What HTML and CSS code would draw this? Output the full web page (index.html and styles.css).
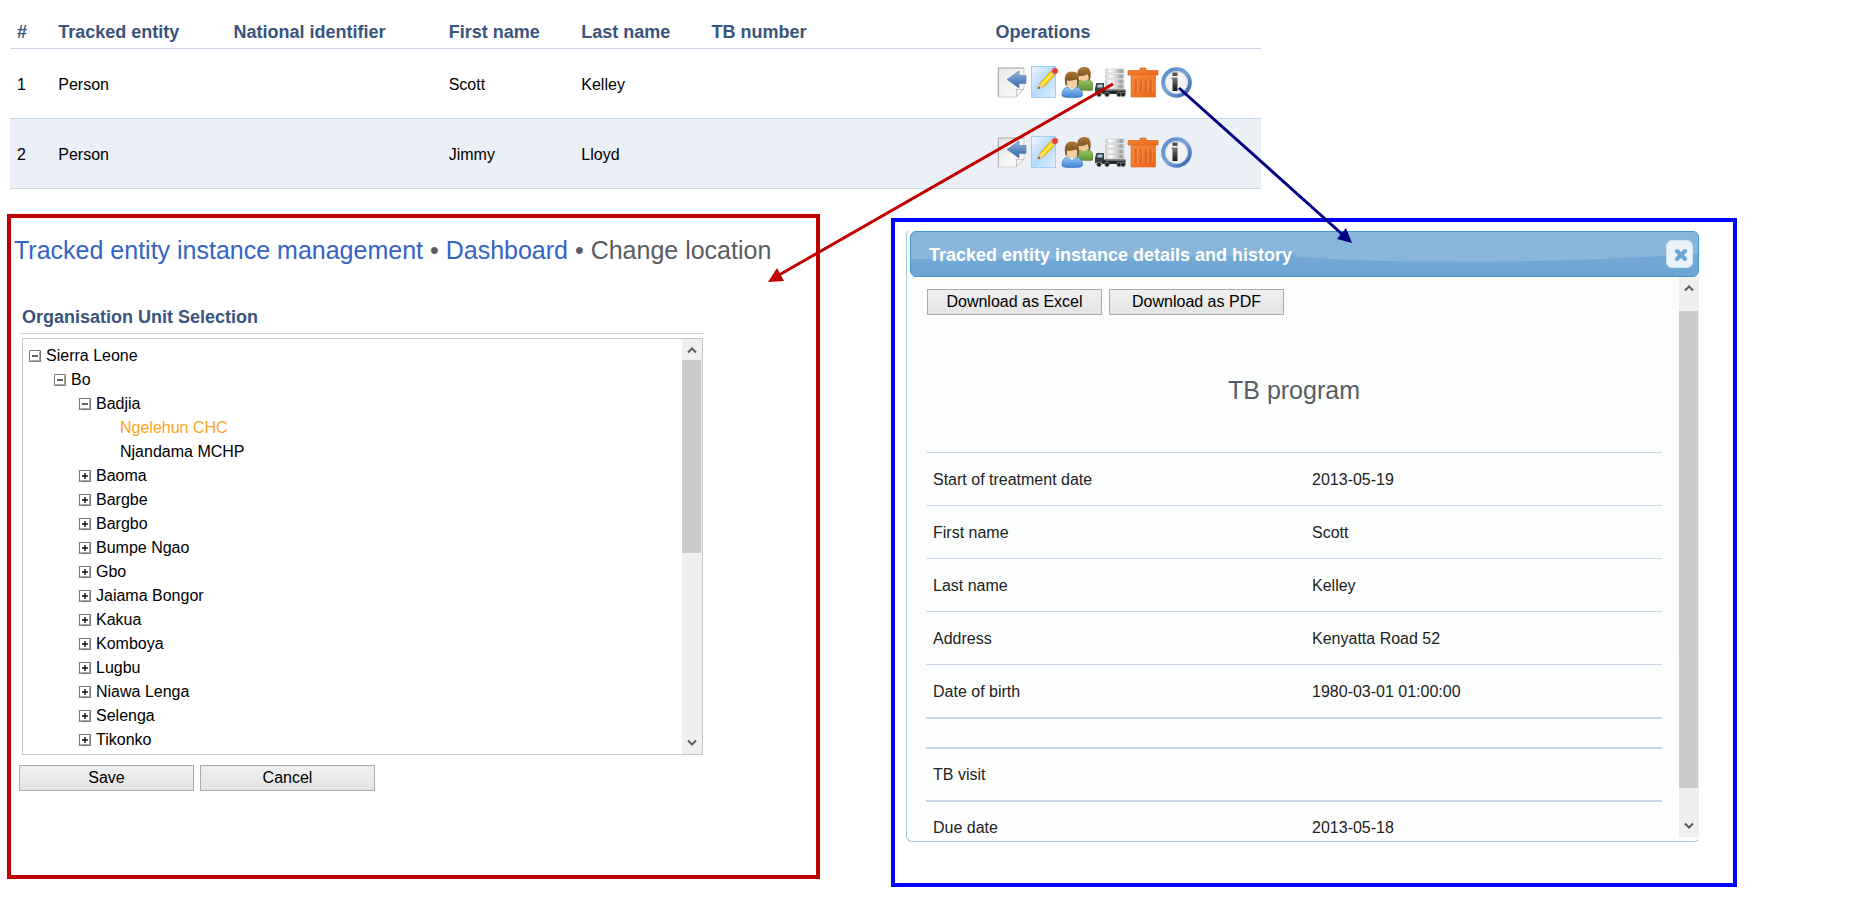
FILE: index.html
```html
<!DOCTYPE html>
<html lang="en">
<head>
<meta charset="utf-8">
<title>Tracked entity instance management</title>
<link rel="stylesheet" href="styles.css">
</head>
<body>
<svg class="defs" aria-hidden="true">
  <defs>
    <linearGradient id="paper" x1="0" y1="0" x2="1" y2="1"><stop offset="0" stop-color="#e6e6e6"/><stop offset="1" stop-color="#ffffff"/></linearGradient>
    <linearGradient id="arrowBlue" x1="0" y1="0" x2="0" y2="1"><stop offset="0" stop-color="#93b6dd"/><stop offset="1" stop-color="#2f64a6"/></linearGradient>
    <linearGradient id="sheet" x1="0" y1="0" x2="1" y2="1"><stop offset="0" stop-color="#f2f9ff"/><stop offset="0.5" stop-color="#b4d9fb"/><stop offset="1" stop-color="#e3f2ff"/></linearGradient>
    <linearGradient id="hair" x1="0" y1="0" x2="0" y2="1"><stop offset="0" stop-color="#a9783a"/><stop offset="1" stop-color="#6d4212"/></linearGradient>
    <linearGradient id="blueShirt" x1="0" y1="0" x2="0" y2="1"><stop offset="0" stop-color="#9ccaf5"/><stop offset="1" stop-color="#3b83d0"/></linearGradient>
    <linearGradient id="greenShirt" x1="0" y1="0" x2="0" y2="1"><stop offset="0" stop-color="#9cc76a"/><stop offset="1" stop-color="#5c9433"/></linearGradient>
    <linearGradient id="drum" x1="0" y1="0" x2="1" y2="0"><stop offset="0" stop-color="#cccccc"/><stop offset="0.25" stop-color="#ffffff"/><stop offset="0.6" stop-color="#d2d2d2"/><stop offset="0.85" stop-color="#9a9a9a"/><stop offset="1" stop-color="#cccccc"/></linearGradient>
    <linearGradient id="bin" x1="0" y1="0" x2="1" y2="1"><stop offset="0" stop-color="#f78a3c"/><stop offset="1" stop-color="#ee6413"/></linearGradient>
    <linearGradient id="ring" x1="0" y1="0" x2="1" y2="1"><stop offset="0" stop-color="#5688c6"/><stop offset="0.5" stop-color="#79a4d8"/><stop offset="1" stop-color="#2f62a8"/></linearGradient>
    <linearGradient id="glyph" x1="0" y1="0" x2="0" y2="1"><stop offset="0" stop-color="#777777"/><stop offset="1" stop-color="#161616"/></linearGradient>
    <linearGradient id="gloss" x1="0" y1="0" x2="0" y2="1"><stop offset="0" stop-color="#74a9d5"/><stop offset="1" stop-color="#6ca4d3"/></linearGradient>
    <symbol id="i-back" viewBox="0 0 32 32">
      <path d="M3 2h26v21l-8 8H3z" fill="url(#paper)" stroke="#d2d2d2"/>
      <path d="M3.500 1.500V31M3 2h26" stroke="#b4b4b4" fill="none"/>
      <path d="M21 31c1-3 1-5 0-8 3 1 5 1 8 0z" fill="#fafafa" stroke="#bdbdbd"/>
      <path d="M12 13.500L24 5v4.500h7v8h-7V22z" fill="url(#arrowBlue)" stroke="#5c84b5" stroke-width="0.700"/>
    </symbol>
    <symbol id="i-edit" viewBox="0 0 32 32">
      <rect x="3.500" y="0.500" width="24" height="31" fill="url(#sheet)" stroke="#9fcdf5"/>
      <path d="M10 23l2-6L23.500 4.500l4 4L16 20.500z" fill="#fbd00c" stroke="#d9a011" stroke-width="0.800"/>
      <path d="M14 18.500L25.500 6.500" stroke="#fff08a" stroke-width="1.200"/>
      <path d="M10 23l2-6 4 3.500z" fill="#f0cf98"/>
      <path d="M10 23l.800-2.600 1.600 1.500z" fill="#333"/>
      <path d="M22.500 5.500l4 4 1.500-1.500-4-4z" fill="#b5bcc4"/>
      <circle cx="27" cy="5" r="3" fill="#ee3d32"/>
    </symbol>
    <symbol id="i-people" viewBox="0 0 32 32">
      <path d="M16 24v-5c0-4 3-6 8-6s8 3 8 7v3c0 1-1 1.500-3 1.500z" fill="url(#greenShirt)" stroke="#578b31" stroke-width="0.700"/>
      <ellipse cx="23" cy="9" rx="5.200" ry="6" fill="#efc99c"/>
      <path d="M16.500 10C15.500 3.500 19 1 23.500 1S30.500 4 29.500 11c0 2-1 3.500-2 4 .5-3 0-5-1-7-3 2-6 2-10 2z" fill="url(#hair)"/>
      <path d="M1 29c0-6 3-8.500 10-8.500S21.500 23 21.500 29c0 2-3 2.500-10.500 2.500S1 31 1 29z" fill="url(#blueShirt)" stroke="#3c7cc2" stroke-width="0.700"/>
      <path d="M7.500 21l3.500 3 3.500-3z" fill="#fff"/>
      <ellipse cx="11" cy="15.500" rx="5.800" ry="7" fill="#f3cfa4"/>
      <path d="M4.500 19C2.500 10 5 5.500 11 5.500S19.500 10 17.500 19c-1 1-1.500 1-1.500 0 .5-3 0-4.500-.5-5.500-3 1-6.500 1.500-9.500 1-.5 1.500 0 2.500 0 4.500 0 1-1 1-1.500 0z" fill="url(#hair)"/>
    </symbol>
    <symbol id="i-move" viewBox="0 0 32 32">
      <g fill="url(#drum)" stroke="#bdbdbd" stroke-width="0.500">
        <rect x="11.500" y="3" width="18.500" height="4" rx="0.500"/>
        <rect x="11.500" y="8.200" width="18.500" height="4" rx="0.500"/>
        <rect x="11.500" y="13.400" width="18.500" height="4" rx="0.500"/>
        <rect x="11.500" y="18.600" width="18.500" height="4" rx="0.500"/>
      </g>
      <path d="M1 27v-5l1.500-5H10v10z" fill="#3a3f44"/>
      <path d="M3 21.500l1-3h4.500v3z" fill="#a9cbe4"/>
      <path d="M10 23.500h21.500V28H8z" fill="#24282b"/>
      <path d="M11 24.500h20" stroke="#6d6d6d"/>
      <path d="M0 28.500h9" stroke="#cfcfcf"/>
      <g fill="#1d1d1d" stroke="#9b9b9b" stroke-width="0.700"><circle cx="5" cy="28.500" r="2.300"/><circle cx="13" cy="28.500" r="2.300"/><circle cx="25" cy="28.500" r="2.300"/><circle cx="29" cy="28.500" r="2.300"/></g>
    </symbol>
    <symbol id="i-trash" viewBox="0 0 32 32">
      <path d="M13 4.500V2h6v2.500h12V9H1V4.500z" fill="url(#bin)" stroke="#d8661f" stroke-width="0.700"/>
      <path d="M4 9.500h24.500V31H4z" fill="url(#bin)" stroke="#e0641a" stroke-width="0.600"/>
      <path d="M9 13v14M14 13v14M19 13v14M24 13v14" stroke="#c05f24" stroke-width="1.300"/>
      <path d="M10.200 13v14M15.200 13v14M20.200 13v14M25.200 13v14" stroke="#fb9350" stroke-width="0.700"/>
    </symbol>
    <symbol id="i-info" viewBox="0 0 32 32">
      <circle cx="16.500" cy="16.500" r="13.300" fill="#f3f3f1" stroke="url(#ring)" stroke-width="4"/>
      <circle cx="16.500" cy="16.500" r="11" fill="none" stroke="#d3dbe4"/>
      <rect x="12.500" y="6.500" width="5" height="3.500" fill="#555"/>
      <path d="M11.500 11.500h6V25h-5V13h-1z" fill="url(#glyph)"/>
    </symbol>
    <symbol id="i-minus" viewBox="0 0 12 12">
      <path d="M.5.500h11v11H.5z" fill="#fff" stroke="#787878"/><path d="M1.500 10.500h9v-9" fill="none" stroke="#a8a8a8"/><path d="M3 6h6" stroke="#222" stroke-width="1.400"/>
    </symbol>
    <symbol id="i-plus" viewBox="0 0 12 12">
      <path d="M.5.500h11v11H.5z" fill="#fff" stroke="#787878"/><path d="M1.500 10.500h9v-9" fill="none" stroke="#a8a8a8"/><path d="M3 6h6M6 3v6" stroke="#111" stroke-width="1.400"/>
    </symbol>
    <symbol id="i-up" viewBox="0 0 10 8"><path d="M1 6.500l4-4 4 4" fill="none" stroke="#5c5c5c" stroke-width="2"/></symbol>
    <symbol id="i-down" viewBox="0 0 10 8"><path d="M1 1.500l4 4 4-4" fill="none" stroke="#5c5c5c" stroke-width="2"/></symbol>
  </defs>
</svg>

<main class="page">
  <table class="instances">
    <colgroup><col class="c-num"><col class="c-entity"><col class="c-national"><col class="c-first"><col class="c-last"><col class="c-tb"><col class="c-ops"></colgroup>
    <thead>
      <tr><th>#</th><th>Tracked entity</th><th>National identifier</th><th>First name</th><th>Last name</th><th>TB number</th><th>Operations</th></tr>
    </thead>
    <tbody>
      <tr>
        <td>1</td><td>Person</td><td></td><td>Scott</td><td>Kelley</td><td></td>
        <td class="ops-cell"><div class="ops">
          <button class="op" aria-label="Go back"><svg><use href="#i-back"/></svg></button>
          <button class="op" aria-label="Edit"><svg><use href="#i-edit"/></svg></button>
          <button class="op" aria-label="Relationships"><svg><use href="#i-people"/></svg></button>
          <button class="op" aria-label="Change location"><svg><use href="#i-move"/></svg></button>
          <button class="op" aria-label="Remove"><svg><use href="#i-trash"/></svg></button>
          <button class="op" aria-label="Show details"><svg><use href="#i-info"/></svg></button>
        </div></td>
      </tr>
      <tr>
        <td>2</td><td>Person</td><td></td><td>Jimmy</td><td>Lloyd</td><td></td>
        <td class="ops-cell"><div class="ops">
          <button class="op" aria-label="Go back"><svg><use href="#i-back"/></svg></button>
          <button class="op" aria-label="Edit"><svg><use href="#i-edit"/></svg></button>
          <button class="op" aria-label="Relationships"><svg><use href="#i-people"/></svg></button>
          <button class="op" aria-label="Change location"><svg><use href="#i-move"/></svg></button>
          <button class="op" aria-label="Remove"><svg><use href="#i-trash"/></svg></button>
          <button class="op" aria-label="Show details"><svg><use href="#i-info"/></svg></button>
        </div></td>
      </tr>
    </tbody>
  </table>

  <div class="panels">
    <section class="panel panel-location">
      <h1 class="crumbs"><a href="#management">Tracked entity instance management</a> • <a href="#dashboard">Dashboard</a> • Change location</h1>
      <div class="selection">
        <h2 class="section-title">Organisation Unit Selection</h2>
        <div class="tree-box">
          <ul class="tree">
            <li><div class="node"><button class="toggle" aria-label="Collapse Sierra Leone"><svg><use href="#i-minus"/></svg></button><a href="#sl">Sierra Leone</a></div>
              <ul>
                <li><div class="node"><button class="toggle" aria-label="Collapse Bo"><svg><use href="#i-minus"/></svg></button><a href="#bo">Bo</a></div>
                  <ul>
                    <li><div class="node"><button class="toggle" aria-label="Collapse Badjia"><svg><use href="#i-minus"/></svg></button><a href="#badjia">Badjia</a></div>
                      <ul>
                        <li><div class="node leaf"><a class="selected" href="#ngelehun">Ngelehun CHC</a></div></li>
                        <li><div class="node leaf"><a href="#njandama">Njandama MCHP</a></div></li>
                      </ul>
                    </li>
                    <li><div class="node"><button class="toggle" aria-label="Expand Baoma"><svg><use href="#i-plus"/></svg></button><a href="#baoma">Baoma</a></div></li>
                    <li><div class="node"><button class="toggle" aria-label="Expand Bargbe"><svg><use href="#i-plus"/></svg></button><a href="#bargbe">Bargbe</a></div></li>
                    <li><div class="node"><button class="toggle" aria-label="Expand Bargbo"><svg><use href="#i-plus"/></svg></button><a href="#bargbo">Bargbo</a></div></li>
                    <li><div class="node"><button class="toggle" aria-label="Expand Bumpe Ngao"><svg><use href="#i-plus"/></svg></button><a href="#bumpe">Bumpe Ngao</a></div></li>
                    <li><div class="node"><button class="toggle" aria-label="Expand Gbo"><svg><use href="#i-plus"/></svg></button><a href="#gbo">Gbo</a></div></li>
                    <li><div class="node"><button class="toggle" aria-label="Expand Jaiama Bongor"><svg><use href="#i-plus"/></svg></button><a href="#jaiama">Jaiama Bongor</a></div></li>
                    <li><div class="node"><button class="toggle" aria-label="Expand Kakua"><svg><use href="#i-plus"/></svg></button><a href="#kakua">Kakua</a></div></li>
                    <li><div class="node"><button class="toggle" aria-label="Expand Komboya"><svg><use href="#i-plus"/></svg></button><a href="#komboya">Komboya</a></div></li>
                    <li><div class="node"><button class="toggle" aria-label="Expand Lugbu"><svg><use href="#i-plus"/></svg></button><a href="#lugbu">Lugbu</a></div></li>
                    <li><div class="node"><button class="toggle" aria-label="Expand Niawa Lenga"><svg><use href="#i-plus"/></svg></button><a href="#niawa">Niawa Lenga</a></div></li>
                    <li><div class="node"><button class="toggle" aria-label="Expand Selenga"><svg><use href="#i-plus"/></svg></button><a href="#selenga">Selenga</a></div></li>
                    <li><div class="node"><button class="toggle" aria-label="Expand Tikonko"><svg><use href="#i-plus"/></svg></button><a href="#tikonko">Tikonko</a></div></li>
                  </ul>
                </li>
              </ul>
            </li>
          </ul>
          <div class="scrollbar">
            <svg class="chevron"><use href="#i-up"/></svg>
            <div class="track"><div class="thumb thumb-tree"></div></div>
            <svg class="chevron"><use href="#i-down"/></svg>
          </div>
        </div>
        <div class="actions">
          <button class="btn">Save</button>
          <button class="btn">Cancel</button>
        </div>
      </div>
    </section>

    <section class="panel panel-details">
      <div class="dialog" role="dialog" aria-labelledby="dialog-title">
        <header class="titlebar">
          <svg class="wave" viewBox="0 0 787 44" preserveAspectRatio="none" aria-hidden="true"><path d="M0 27Q190 28 384 22V25Q560 36 787 22V44H0z" fill="url(#gloss)"/></svg>
          <h2 class="dialog-title" id="dialog-title">Tracked entity instance details and history</h2>
          <button class="close" aria-label="Close"><svg viewBox="0 0 14 14"><path d="M3 3l8 8M11 3l-8 8" stroke="#6aa5d4" stroke-width="4" stroke-linecap="round"/></svg></button>
        </header>
        <div class="dialog-body">
          <div class="content">
            <div class="downloads">
              <button class="btn">Download as Excel</button>
              <button class="btn">Download as PDF</button>
            </div>
            <h3 class="program">TB program</h3>
            <table class="details">
              <tbody>
                <tr><th scope="row">Start of treatment date</th><td>2013-05-19</td></tr>
                <tr><th scope="row">First name</th><td>Scott</td></tr>
                <tr><th scope="row">Last name</th><td>Kelley</td></tr>
                <tr><th scope="row">Address</th><td>Kenyatta Road 52</td></tr>
                <tr><th scope="row">Date of birth</th><td>1980-03-01 01:00:00</td></tr>
                <tr class="spacer strong"><td colspan="2"></td></tr>
                <tr class="strong"><th scope="row">TB visit</th><td></td></tr>
                <tr class="strong"><th scope="row">Due date</th><td>2013-05-18</td></tr>
              </tbody>
            </table>
          </div>
          <div class="scrollbar scrollbar-dialog">
            <svg class="chevron"><use href="#i-up"/></svg>
            <div class="track"><div class="thumb thumb-dialog"></div></div>
            <svg class="chevron"><use href="#i-down"/></svg>
          </div>
        </div>
      </div>
    </section>
  </div>

  <svg class="arrows" aria-hidden="true">
    <path d="M1113 84L779 275" stroke="#c00000" stroke-width="3"/>
    <path d="M768 282l9-14 7 13z" fill="#c00000"/>
    <path d="M1179 88L1343 235" stroke="#000080" stroke-width="3"/>
    <path d="M1352 243l-6-15-9 11z" fill="#000080"/>
  </svg>
</main>
</body>
</html>
```

FILE: styles.css
```css
* { box-sizing: border-box; }

body {
  margin: 0;
  background: #fff;
  color: #000;
  font: 16px/24px "Liberation Sans", Arial, sans-serif;
}

h1, h2, h3, ul { margin: 0; padding: 0; }

button {
  margin: 0;
  padding: 0;
  border: 0;
  background: none;
  color: inherit;
  font: inherit;
  cursor: pointer;
}

.defs { position: absolute; width: 0; height: 0; }

.page {
  position: relative;
  padding: 16px 0 24px;
}

/* Instance list */
.instances {
  width: 66.7%;
  margin-left: 10px;
  border-spacing: 0;
  table-layout: fixed;
}

.c-num { width: 3.3%; }
.c-entity { width: 14%; }
.c-national { width: 17.2%; }
.c-first { width: 10.6%; }
.c-last { width: 10.4%; }
.c-tb { width: 22.7%; }
.c-ops { width: 21.8%; }

.instances th,
.instances td {
  padding: 0 7px;
  border-bottom: 1px solid #c7d5e7;
  text-align: left;
  white-space: nowrap;
}

.instances th {
  height: 33px;
  color: #39547d;
  font-size: 18px;
}

.instances td { height: 70px; padding-top: 2px; }
.instances .ops-cell { padding-top: 0; padding-bottom: 3px; }
.instances tbody tr:nth-child(even) { background: #ebeff6; }

.ops { display: flex; gap: 1px; }
.op, .op svg { display: block; width: 32px; height: 32px; }

/* Panels */
.panels {
  display: grid;
  grid-template-columns: 813fr 846fr;
  gap: 71px;
  align-items: start;
  padding: 25px 139px 0 7px;
}

.panel { min-width: 0; border: 4px solid; }
.panel-location { border-color: #c00000; padding: 17px 0 84px; }
.panel-details { border-color: #00f; margin-top: 4px; padding: 7px 33px 41px 11px; }

.crumbs {
  padding-left: 3px;
  color: #595c62;
  font-size: 25px;
  font-weight: 400;
  line-height: 30px;
}

.crumbs a { color: #3563c8; text-decoration: none; }

.selection { margin: 41px 112px 0 9px; }

.section-title {
  padding: 0 2px 5px;
  border-bottom: 1px solid #c7d5e7;
  color: #39547d;
  font-size: 18px;
  line-height: 22px;
}

.tree-box {
  display: flex;
  margin: 4px 1px 0 2px;
  border: 1px solid #c6c6c6;
}

.tree { flex: 1; padding: 5px 0 2px 6px; }
.tree ul { padding-left: 25px; }
.tree li { list-style: none; }
.node { display: flex; align-items: center; gap: 5px; height: 24px; }
.node.leaf { padding-left: 16px; }
.node a { color: #000; text-decoration: none; }
.node a.selected { color: #ffa41c; }
.toggle, .toggle svg { display: block; width: 12px; height: 12px; }

.scrollbar {
  display: flex;
  flex-direction: column;
  align-items: center;
  justify-content: space-between;
  width: 20px;
  padding: 7px 0;
  background: #efefef;
}

.chevron { width: 10px; height: 8px; }
.track { flex: 1; width: 100%; padding: 6px 1px 0 0; }
.thumb { background: #cbcbcb; }
.thumb-tree { height: 51%; }
.scrollbar-dialog .track { padding-top: 19px; }
.thumb-dialog { height: 93.4%; }

.actions { display: flex; gap: 6px; margin: 10px 0 0 -1px; }

.btn {
  width: 175px;
  height: 26px;
  border: 1px solid #ababab;
  background: linear-gradient(#f0f0f0, #e4e4e4);
  line-height: 24px;
}

/* Dialog */
.dialog {
  padding: 1px 0 0 3px;
  border: 1px solid #a6c9e2;
  border-top-color: transparent;
  border-right-color: transparent;
  border-radius: 6px;
  background: linear-gradient(#fbfdfd, #fcfefd 80%, #fefefe);
  background-clip: padding-box;
}

.titlebar {
  position: relative;
  display: flex;
  align-items: center;
  justify-content: space-between;
  height: 46px;
  padding: 0 5px 0 18px;
  overflow: hidden;
  border: 1px solid #4297d7;
  border-radius: 6px;
  background: #88b5da;
}

.wave { position: absolute; inset: 0; width: 100%; height: 100%; }
.dialog-title { position: relative; padding-top: 2px; color: #fff; font-size: 18px; line-height: 22px; }

.close {
  position: relative;
  display: flex;
  align-items: center;
  justify-content: center;
  width: 27px;
  height: 28px;
  padding: 2px 0 0 2px;
  border: 1px solid #cfe3f3;
  border-radius: 6px;
  background: #e8f3fc;
}

.close svg { width: 14px; height: 14px; }

.dialog-body { display: flex; height: 564px; }
.content { flex: 1; min-width: 0; padding: 12px 17px 0 16px; overflow: hidden; }
.scrollbar-dialog { margin-bottom: 4px; }
.downloads { display: flex; gap: 7px; margin-left: 1px; }

.program {
  margin: 60px 0 47px;
  color: #595c62;
  font-size: 25px;
  font-weight: 400;
  line-height: 30px;
  text-align: center;
}

.details {
  width: 100%;
  border-spacing: 0;
  color: #222;
  table-layout: fixed;
}

.details th,
.details td {
  height: 53px;
  padding: 2px 7px 0;
  border-top: 1px solid #c7d5e7;
  font-weight: 400;
  text-align: left;
}

.details th { width: 51.5%; }
.details .strong th, .details .strong td { padding-top: 0; border-top-width: 2px; }
.details .spacer td { height: 30px; }

/* Callout arrows */
.arrows {
  position: absolute;
  top: 0;
  left: 0;
  width: 100%;
  height: 100%;
  pointer-events: none;
}
```
